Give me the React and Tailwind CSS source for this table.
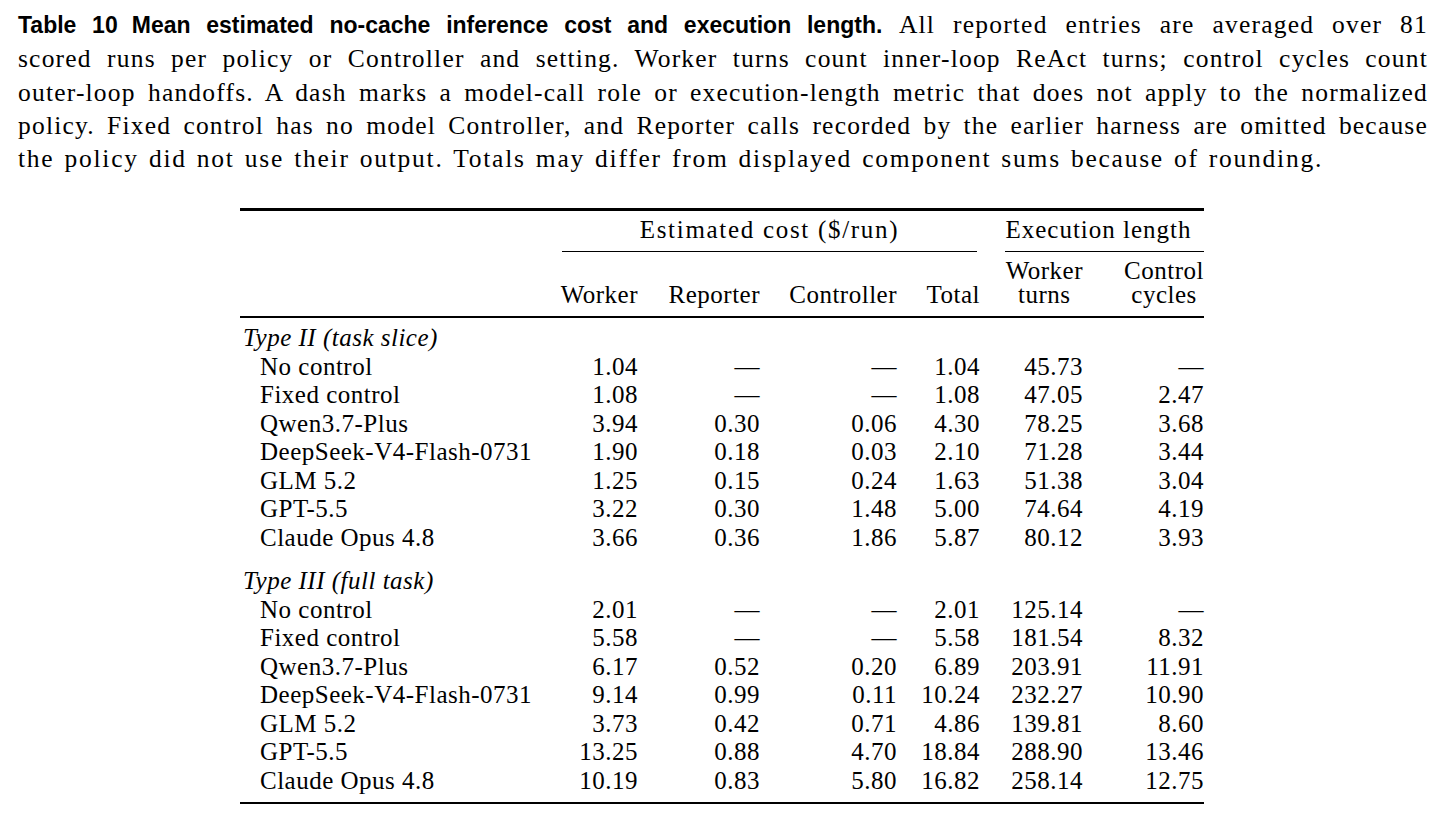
import React from "react";

const typeII = [
  ["No control", "1.04", "—", "—", "1.04", "45.73", "—"],
  ["Fixed control", "1.08", "—", "—", "1.08", "47.05", "2.47"],
  ["Qwen3.7-Plus", "3.94", "0.30", "0.06", "4.30", "78.25", "3.68"],
  ["DeepSeek-V4-Flash-0731", "1.90", "0.18", "0.03", "2.10", "71.28", "3.44"],
  ["GLM 5.2", "1.25", "0.15", "0.24", "1.63", "51.38", "3.04"],
  ["GPT-5.5", "3.22", "0.30", "1.48", "5.00", "74.64", "4.19"],
  ["Claude Opus 4.8", "3.66", "0.36", "1.86", "5.87", "80.12", "3.93"],
];

const typeIII = [
  ["No control", "2.01", "—", "—", "2.01", "125.14", "—"],
  ["Fixed control", "5.58", "—", "—", "5.58", "181.54", "8.32"],
  ["Qwen3.7-Plus", "6.17", "0.52", "0.20", "6.89", "203.91", "11.91"],
  ["DeepSeek-V4-Flash-0731", "9.14", "0.99", "0.11", "10.24", "232.27", "10.90"],
  ["GLM 5.2", "3.73", "0.42", "0.71", "4.86", "139.81", "8.60"],
  ["GPT-5.5", "13.25", "0.88", "4.70", "18.84", "288.90", "13.46"],
  ["Claude Opus 4.8", "10.19", "0.83", "5.80", "16.82", "258.14", "12.75"],
];

const cols = "grid grid-cols-[308px_90px_122px_137px_83px_103px_121px]";

function DataRow({ row }) {
  return (
    <div className={`${cols} h-[28.5px] leading-[28.5px]`}>
      <div className="pl-[20px] whitespace-nowrap">{row[0]}</div>
      {row.slice(1).map((v, i) => (
        <div key={i} className="text-right whitespace-nowrap">{v}</div>
      ))}
    </div>
  );
}

function Section({ title, rows }) {
  return (
    <div>
      <div className="h-[28.5px] leading-[28.5px] pl-[3px] italic">{title}</div>
      {rows.map((r) => (
        <DataRow key={r[0]} row={r} />
      ))}
    </div>
  );
}

export default function App() {
  return (
    <div className="w-[1446px] h-[821px] bg-white text-black overflow-hidden font-['Liberation_Serif',serif] text-[25px] tracking-[0.5px]">
      {/* Caption */}
      <div className="px-[18px] pt-[8px] text-[25.5px] tracking-[1.2px] [word-spacing:1px]">
        <div className="h-[34px] leading-[34px] text-justify [text-align-last:justify] whitespace-nowrap">
          <span className="font-['Liberation_Sans',sans-serif] font-bold text-[23px] tracking-normal [word-spacing:0px]">
            Table 10<span className="inline-block w-[14px]"></span>Mean estimated no-cache inference cost and execution length.
          </span>{" "}
          All reported entries are averaged over 81
        </div>
        <div className="h-[34px] leading-[34px] text-justify [text-align-last:justify] whitespace-nowrap">
          scored runs per policy or Controller and setting. Worker turns count inner-loop ReAct turns; control cycles count
        </div>
        <div className="h-[33px] leading-[33px] text-justify [text-align-last:justify] whitespace-nowrap">
          outer-loop handoffs. A dash marks a model-call role or execution-length metric that does not apply to the normalized
        </div>
        <div className="h-[33px] leading-[33px] text-justify [text-align-last:justify] whitespace-nowrap">
          policy. Fixed control has no model Controller, and Reporter calls recorded by the earlier harness are omitted because
        </div>
        <div className="h-[33px] leading-[33px] whitespace-nowrap tracking-[1.75px] [word-spacing:2px]">
          the policy did not use their output. Totals may differ from displayed component sums because of rounding.
        </div>
      </div>

      {/* Table */}
      <div className="ml-[240px] w-[964px] mt-[33px]">
        <div className="h-[2.5px] bg-black"></div>

        {/* Header row 1 */}
        <div className={`${cols} pt-[5.5px]`}>
          <div></div>
          <div className="col-span-4 pl-[14px] pr-[3px]">
            <div className="h-[28.5px] leading-[28.5px] text-center tracking-[1.7px]">Estimated cost ($/run)</div>
            <div className="h-[1.5px] bg-black mt-[6px]"></div>
          </div>
          <div className="col-span-2 pl-[25px]">
            <div className="h-[28.5px] leading-[28.5px] text-center tracking-[1px] pr-[12px]">Execution length</div>
            <div className="h-[1.5px] bg-black mt-[6px]"></div>
          </div>
        </div>

        {/* Header row 2 */}
        <div className={`${cols} items-end pt-[7px] pb-[9px] leading-[24px]`}>
          <div></div>
          <div className="text-right">Worker</div>
          <div className="text-right">Reporter</div>
          <div className="text-right">Controller</div>
          <div className="text-right">Total</div>
          <div className="flex justify-end">
            <div className="text-center">
              <div>Worker</div>
              <div>turns</div>
            </div>
          </div>
          <div className="flex justify-end">
            <div className="text-center">
              <div>Control</div>
              <div>cycles</div>
            </div>
          </div>
        </div>

        <div className="h-[1.5px] bg-black"></div>

        <div className="pt-[6.5px]">
          <Section title="Type II (task slice)" rows={typeII} />
          <div className="h-[15px]"></div>
          <Section title="Type III (full task)" rows={typeIII} />
        </div>

        <div className="h-[2.5px] bg-black mt-[6.5px]"></div>
      </div>
    </div>
  );
}
